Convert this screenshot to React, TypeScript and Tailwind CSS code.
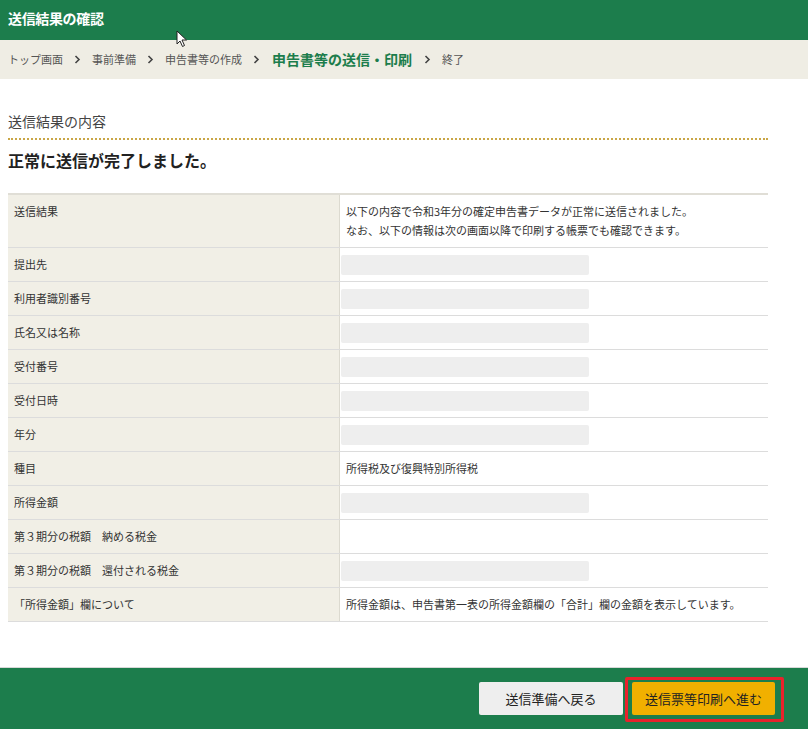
const rows: { label: string; value?: string; lines?: string[]; masked?: boolean }[] = [
  { label: '送信結果', lines: ['以下の内容で令和3年分の確定申告書データが正常に送信されました。', 'なお、以下の情報は次の画面以降で印刷する帳票でも確認できます。'] },
  { label: '提出先', masked: true },
  { label: '利用者識別番号', masked: true },
  { label: '氏名又は名称', masked: true },
  { label: '受付番号', masked: true },
  { label: '受付日時', masked: true },
  { label: '年分', masked: true },
  { label: '種目', value: '所得税及び復興特別所得税' },
  { label: '所得金額', masked: true },
  { label: '第３期分の税額　納める税金' },
  { label: '第３期分の税額　還付される税金', masked: true },
  { label: '「所得金額」欄について', value: '所得金額は、申告書第一表の所得金額欄の「合計」欄の金額を表示しています。' },
];

const crumbs = ['トップ画面', '事前準備', '申告書等の作成', '申告書等の送信・印刷', '終了'];

function Chevron() {
  return (
    <svg width="7" height="9" viewBox="0 0 7 9" className="mx-[11px] shrink-0">
      <path d="M1.5 1 L5 4.5 L1.5 8" fill="none" stroke="#444" strokeWidth="1.6" />
    </svg>
  );
}

export default function App() {
  return (
    <div
      className="relative w-[808px] h-[744px] bg-white text-[#333] overflow-hidden"
      style={{ fontFamily: '"Noto Sans CJK JP", "Noto Sans", sans-serif' }}
    >
      {/* header */}
      <div className="h-10 bg-[#1c7d4c] flex items-center px-2 pb-1">
        <h1 className="text-[14px] font-bold text-white tracking-tight">送信結果の確認</h1>
      </div>

      {/* mouse cursor */}
      <svg width="12" height="18" viewBox="0 0 12 18" className="absolute left-[176px] top-[30px]">
        <path d="M1 1 L1 14 L4 11 L6.5 16.5 L8.5 15.5 L6 10 L10.5 10 Z" fill="white" stroke="#222" strokeWidth="1" strokeLinejoin="round" />
      </svg>

      {/* breadcrumb */}
      <div className="h-[39px] bg-[#efede4] flex items-center px-2 text-[11px] text-[#555]">
        {crumbs.map((c, i) => (
          <div key={c} className="flex items-center">
            {i > 0 && <Chevron />}
            {i === 3 ? (
              <span className="text-[14px] font-bold text-[#1c7d4c] ml-[1px] mr-[1px]">{c}</span>
            ) : (
              <span>{c}</span>
            )}
          </div>
        ))}
      </div>

      {/* content */}
      <div className="px-2 pt-[32px] w-[776px]">
        <h2 className="text-[14px] text-[#444] leading-5 pb-[7px] border-b-2 border-dotted border-[#c9a646]">送信結果の内容</h2>
        <p className="text-[16px] font-bold text-[#222] mt-[8px] leading-6">正常に送信が完了しました。</p>

        <div className="mt-[21px] border-t-2 border-[#e0ded6] text-[11px]">
          {rows.map((r, i) => (
            <div key={i} className="flex border-b border-[#dcdcdc]">
              <div
                className={`w-[332px] shrink-0 bg-[#f1efe6] border-r border-[#dcdad0] px-[6px] flex ${
                  r.lines ? 'py-[7px] items-start leading-[19px]' : 'h-[33px] items-center'
                }`}
              >
                {r.label}
              </div>
              <div className={`flex-1 px-[6px] flex ${r.lines ? 'py-[7px] flex-col leading-[19px]' : 'h-[33px] items-center'}`}>
                {r.lines && r.lines.map((l) => <div key={l}>{l}</div>)}
                {r.value && <div>{r.value}</div>}
                {r.masked && <div className="-ml-[5px] w-[248px] h-[20px] rounded-[2px] bg-[#eeeeee]" />}
              </div>
            </div>
          ))}
        </div>
      </div>

      {/* footer */}
      <div className="absolute left-0 right-0 top-[667px] border-t border-[#d8d8d8] h-[62px] bg-[#1c7d4c] flex items-center justify-end pr-[33px] gap-[9px]">
        <button className="w-[144px] h-[33px] bg-[#eeeeee] text-[13px] text-[#222] rounded-[2px]">送信準備へ戻る</button>
        <div className="relative">
          <button className="w-[143px] h-[33px] bg-[#f1b000] text-[13px] text-[#222] rounded-[2px]">送信票等印刷へ進む</button>
          <div className="absolute -left-[7px] -top-[5px] w-[159px] h-[45px] border-[3px] border-[#e8222c] rounded-[2px]" />
        </div>
      </div>
    </div>
  );
}
